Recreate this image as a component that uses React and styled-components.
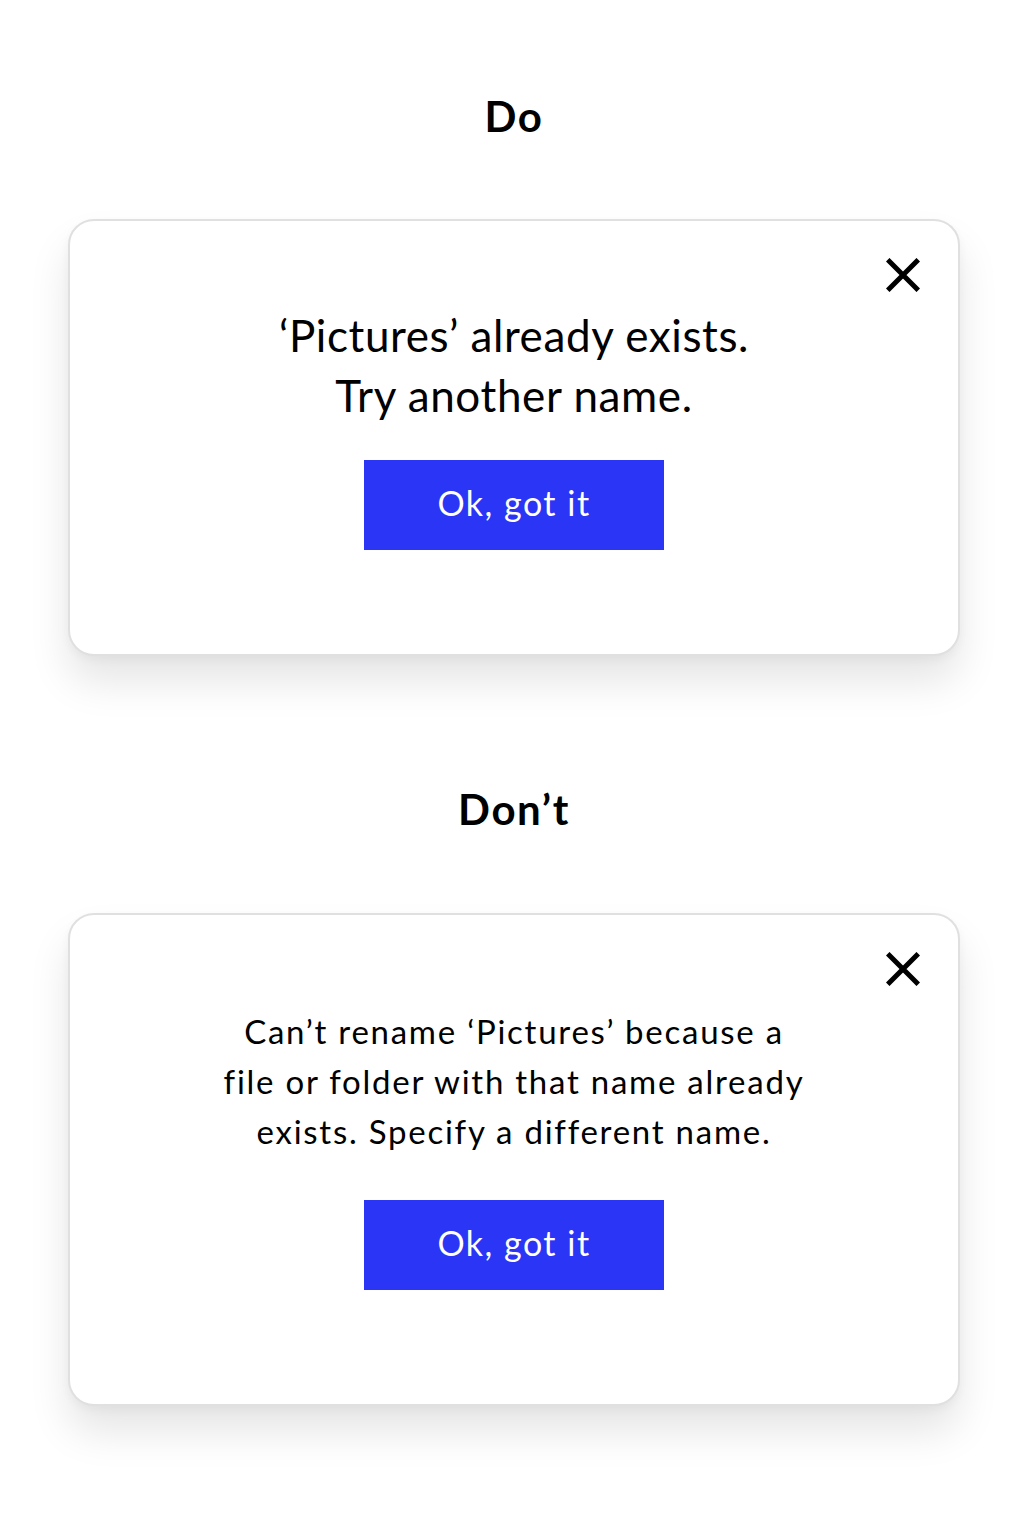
import React from "react";
import styled, { createGlobalStyle } from "styled-components";

const GlobalStyle = createGlobalStyle`
  html, body {
    margin: 0;
    padding: 0;
    background: #ffffff;
  }
  body {
    font-family: Lato, "Noto Sans", "Liberation Sans", sans-serif;
    color: #000;
    -webkit-font-smoothing: antialiased;
  }
`;

const Page = styled.div`
  width: 1028px;
  padding: 92px 0 114px;
  display: flex;
  flex-direction: column;
  align-items: center;
`;

const Section = styled.section`
  width: 100%;
  display: flex;
  flex-direction: column;
  align-items: center;
  margin-bottom: ${(p) => p.$after || 0}px;
`;

const Heading = styled.h2`
  margin: 0 0 ${(p) => p.$gap}px;
  font-size: 42px;
  line-height: 48px;
  font-weight: 700;
  letter-spacing: 1.6px;
  text-align: center;
`;

const Card = styled.div`
  position: relative;
  box-sizing: border-box;
  width: 892px;
  height: ${(p) => p.$height}px;
  padding-top: ${(p) => p.$top}px;
  border: 2px solid #e0e0e0;
  border-radius: 26px;
  background: #fff;
  box-shadow: 0 26px 40px rgba(0, 0, 0, 0.1), 0 4px 10px rgba(0, 0, 0, 0.04);
  display: flex;
  flex-direction: column;
  align-items: center;
`;

const CloseButton = styled.button`
  position: absolute;
  top: 36px;
  right: 37px;
  width: 36px;
  height: 36px;
  padding: 0;
  border: none;
  background: transparent;
  cursor: pointer;
  display: flex;
  align-items: center;
  justify-content: center;
`;

const Message = styled.p`
  margin: 0 0 ${(p) => p.$gap}px;
  font-size: ${(p) => p.$size}px;
  line-height: ${(p) => p.$line}px;
  letter-spacing: ${(p) => p.$track}px;
  text-align: center;
  font-weight: 400;
`;

const OkButton = styled.button`
  width: 300px;
  height: 90px;
  padding: 0 0 5px;
  border: none;
  background: #2b35f5;
  color: #fff;
  font-family: inherit;
  font-size: 34px;
  letter-spacing: 1.5px;
  font-weight: 400;
  cursor: pointer;
`;

const CloseIcon = () => (
  <svg width="34" height="34" viewBox="0 0 34 34" fill="none">
    <path d="M3.5 3.5 L30.5 30.5 M30.5 3.5 L3.5 30.5" stroke="#000" strokeWidth="5" strokeLinecap="square" />
  </svg>
);

const Dialog = ({ height, top, size, line, track, gap, children }) => (
  <Card $height={height} $top={top}>
    <CloseButton aria-label="Close">
      <CloseIcon />
    </CloseButton>
    <Message $size={size} $line={line} $track={track} $gap={gap}>
      {children}
    </Message>
    <OkButton>Ok, got it</OkButton>
  </Card>
);

export default function App() {
  return (
    <>
      <GlobalStyle />
      <Page>
        <Section $after={129}>
          <Heading $gap={79}>Do</Heading>
          <Dialog height={437} top={84} size={44} line={60} track={0.6} gap={35}>
            ‘Pictures’ already exists.
            <br />
            Try another name.
          </Dialog>
        </Section>
        <Section>
          <Heading $gap={80}>Don’t</Heading>
          <Dialog height={493} top={91} size={33} line={50} track={1.75} gap={44}>
            Can’t rename ‘Pictures’ because a
            <br />
            file or folder with that name already
            <br />
            exists. Specify a different name.
          </Dialog>
        </Section>
      </Page>
    </>
  );
}
